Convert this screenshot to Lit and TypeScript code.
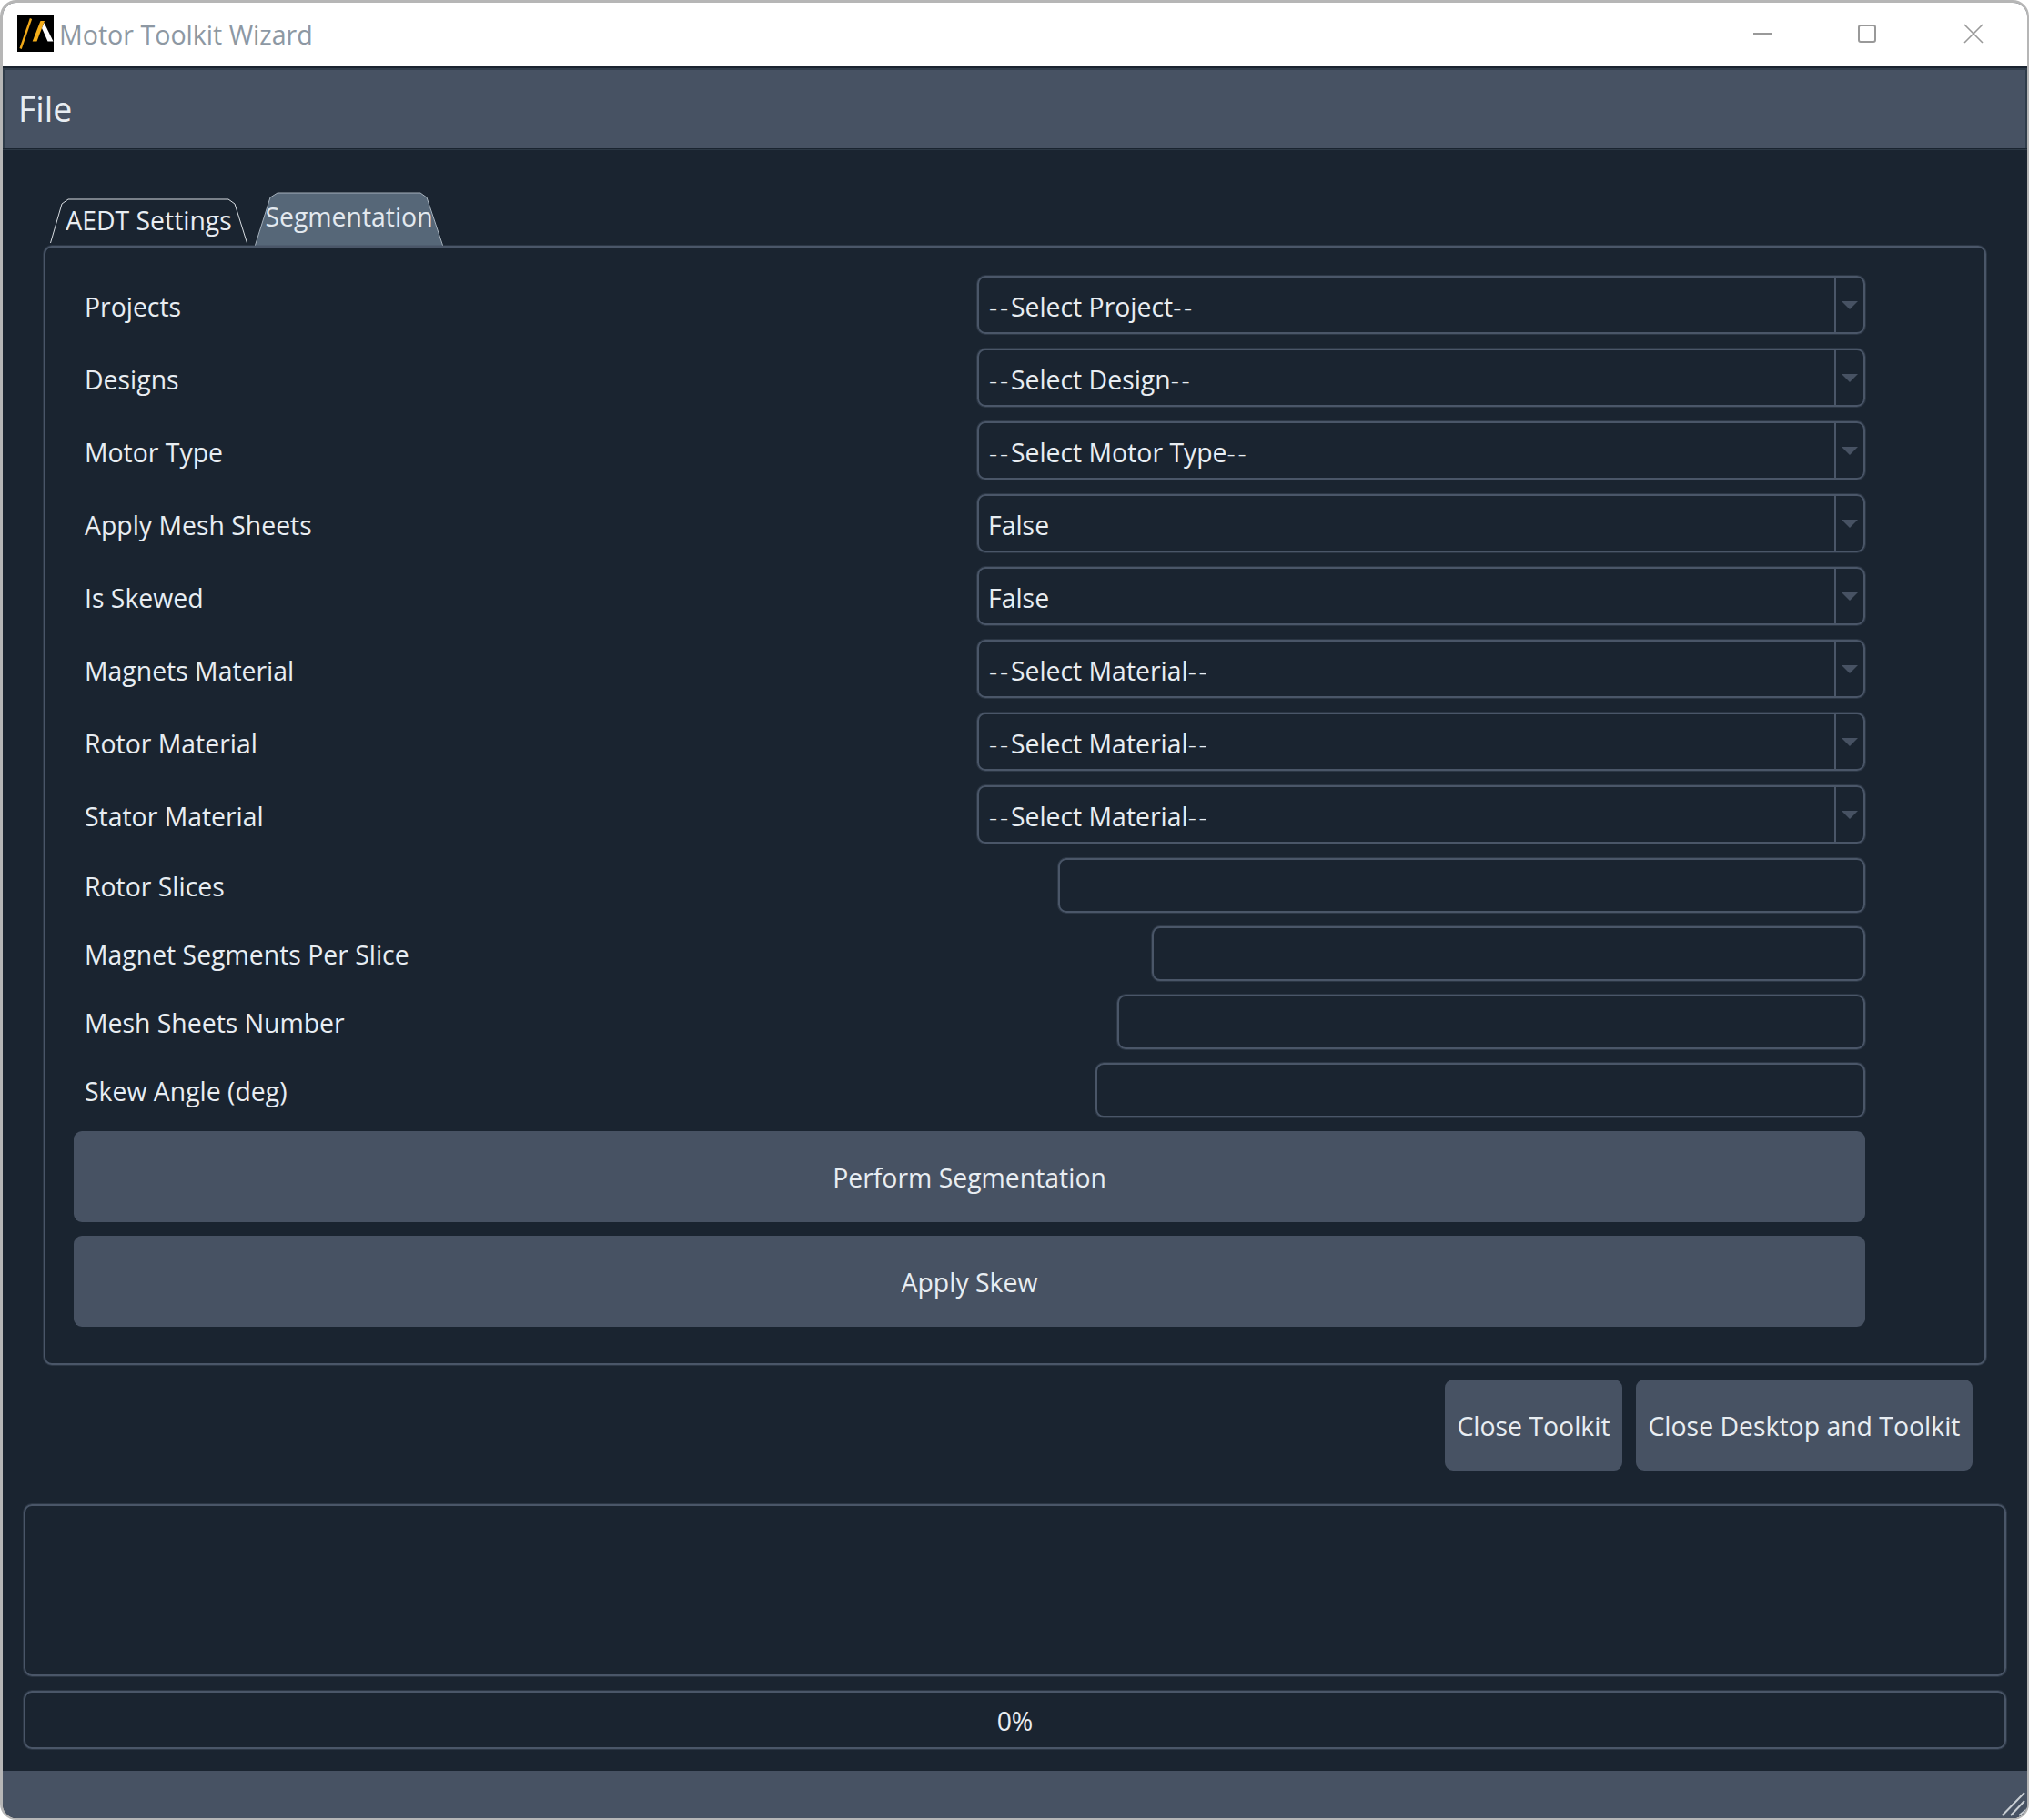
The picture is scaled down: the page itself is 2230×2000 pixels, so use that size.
import { LitElement, html, css } from "lit";
import { customElement } from "lit/decorators.js";

const selects = [
  ["Projects", "Select Project", true],
  ["Designs", "Select Design", true],
  ["Motor Type", "Select Motor Type", true],
  ["Apply Mesh Sheets", "False", false],
  ["Is Skewed", "False", false],
  ["Magnets Material", "Select Material", true],
  ["Rotor Material", "Select Material", true],
  ["Stator Material", "Select Material", true],
] as [string, string, boolean][];
const inputs: [string, number][] = [
  ["Rotor Slices", 887],
  ["Magnet Segments Per Slice", 784],
  ["Mesh Sheets Number", 822],
  ["Skew Angle (deg)", 846],
];

@customElement("app-root")
export class AppRoot extends LitElement {
  static styles = css`
    :host { display: block; width: 2230px; height: 2000px; font-family: "Open Sans", "Noto Sans", sans-serif; background: #fff; }
    * { box-sizing: border-box; }
    .window { height: 2000px; border: 3px solid #b6b6b6; border-width: 3px 2px 2px 3px; border-radius: 18px; overflow: hidden; display: flex; flex-direction: column; background: #1a2430; }
    .title { height: 70px; flex: none; background: #fff; display: flex; align-items: center; padding: 0 48px 2px 16px; color: #8d98a3; font-size: 28.6px; }
    .logo { width: 40px; height: 40px; margin-right: 6px; display: block; flex: none; }
    .winbtns { margin-left: auto; display: flex; align-items: center; }
    .winbtns svg { width: 22px; height: 22px; display: block; }
    .winbtns .mx { margin-left: 93px; }
    .winbtns .cl { margin-left: 95px; }
    .menu { flex: none; height: 88px; margin-top: 2px; background: #475263; border: 2px solid #2f3c4a; border-bottom: none; display: flex; align-items: center; padding: 0 0 1px 15px; color: #e8edf2; font-size: 37.5px; }
    .rule { flex: none; height: 1px; margin-top: 1px; background: #2c3845; }
    .main { flex: 1; display: flex; flex-direction: column; color: #e8edf2; font-size: 28.4px; }
    .tabs { margin: 46px 0 0 52px; height: 60px; display: flex; align-items: flex-end; }
    .tab { position: relative; display: flex; align-items: center; justify-content: center; }
    .tab svg { position: absolute; inset: 0; width: 100%; height: 100%; display: block; }
    .tab span { position: relative; white-space: nowrap; }
    .tab.off { width: 217px; height: 50px; margin-bottom: 3px; }
    .tab.off span { margin-top: -3px; }
    .tab.on { width: 207px; height: 60px; margin-left: 8px; }
    .tab.on span { margin-top: -6px; color: #e3e9ef; }
    .panel { margin: -1px 45px 0; height: 1230px; border: 2px solid #4a5668; box-shadow: 0 0 0 1px rgba(71, 82, 99, 0.4); border-radius: 9px; padding: 31px 131px 0 31px; display: flex; flex-direction: column; position: relative; background: #1a2430; }
    .row { display: flex; justify-content: space-between; align-items: center; padding-left: 12px; }
    .row.sel { height: 64px; margin-bottom: 16px; }
    .row.sel label { padding-top: 4px; }
    .row.inp { height: 60px; margin-bottom: 15px; }
    .row.inp label { padding-top: 2px; }
    .row label { white-space: nowrap; }
    .select { width: 976px; height: 64px; border: 2px solid #4a5668; box-shadow: 0 0 0 1px rgba(71, 82, 99, 0.4); border-radius: 9px; display: flex; align-items: center; }
    .select .v { flex: 1; padding: 4px 0 0 10px; }
    .dash { letter-spacing: 2.8px; font-weight: 300; }
    .dash:first-child { margin-left: 1px; }
    .select .arrow { width: 32px; height: 100%; border-left: 2px solid #4a5668; display: flex; align-items: center; justify-content: center; }
    .select .arrow svg { width: 18px; height: 9px; display: block; }
    .input { height: 60px; border: 2px solid #4a5668; box-shadow: 0 0 0 1px rgba(71, 82, 99, 0.4); border-radius: 9px; }
    .btn { background: #475263; border-radius: 9px; display: flex; align-items: center; justify-content: center; height: 100px; padding-top: 2px; }
    .btn.wide { margin-bottom: 15px; }
    .closes { display: flex; justify-content: flex-end; gap: 15px; margin: 16px 60px 0 0; }
    .closes .a { width: 195px; }
    .closes .b { width: 370px; }
    .log { margin: 37px 23px 0; height: 189px; border: 2px solid #4a5668; box-shadow: 0 0 0 1px rgba(71, 82, 99, 0.4); border-radius: 9px; }
    .progress { margin: 16px 23px 0; height: 64px; border: 2px solid #4a5668; box-shadow: 0 0 0 1px rgba(71, 82, 99, 0.4); border-radius: 9px; display: flex; align-items: center; justify-content: center; padding-top: 2px; }
    .status { flex: none; height: 52px; background: #475263; margin-top: auto; position: relative; }
    .grip { position: absolute; right: 0; bottom: 0; width: 30px; height: 30px; display: block; }
  `;

  private arrow() {
    return html`<span class="arrow"><svg viewBox="0 0 18 9"><path d="M0 0H18L9 9Z" fill="#475263"></path></svg></span>`;
  }

  private value(v: string, dashed: boolean) {
    return dashed
      ? html`<span class="dash">--</span>${v}<span class="dash">--</span>`
      : html`${v}`;
  }

  render() {
    return html`<div class="window">
      <div class="title">
        <svg class="logo" viewBox="0 0 40 40">
          <rect width="40" height="40" fill="#000"></rect>
          <path d="M3.6 36.5L15 3.5" stroke="#f0a818" stroke-width="2.4" fill="none"></path>
          <path d="M16.7 28.5H21.5L30 6H25.5Z" fill="#f5ae1a"></path>
          <path d="M29.5 8L39.5 28.5H33.5L27 14Z" fill="#fff"></path>
        </svg>
        <span>Motor Toolkit Wizard</span>
        <div class="winbtns">
          <svg viewBox="0 0 22 22"><path d="M1 11H21" stroke="#999" stroke-width="2"></path></svg>
          <svg class="mx" viewBox="0 0 22 22"><rect x="2" y="2" width="18" height="18" rx="2" fill="none" stroke="#999" stroke-width="2"></rect></svg>
          <svg class="cl" viewBox="0 0 22 22"><path d="M1 1L21 21M21 1L1 21" stroke="#999" stroke-width="1.6"></path></svg>
        </div>
      </div>
      <div class="menu">File</div>
      <div class="rule"></div>
      <div class="main">
        <div class="tabs">
          <div class="tab off">
            <svg viewBox="0 0 217 50" preserveAspectRatio="none"><path d="M0.5 49L13 6L20 1H196L203 6L216.5 49" fill="none" stroke="#d8dde2" stroke-width="1"></path></svg>
            <span>AEDT Settings</span>
          </div>
          <div class="tab on">
            <svg viewBox="0 0 207 60" preserveAspectRatio="none"><path d="M0 60L17 6L25 1H182L189 6L207 60Z" fill="#566778"></path><path d="M0 60L17 6L25 1H182L189 6L207 60" fill="none" stroke="#a5b0bb" stroke-width="1"></path></svg>
            <span>Segmentation</span>
          </div>
        </div>
        <div class="panel">
          ${selects.map(([l, v, d]) => html`<div class="row sel"><label>${l}</label><div class="select"><span class="v">${this.value(v, d)}</span>${this.arrow()}</div></div>`)}
          ${inputs.map(([l, w]) => html`<div class="row inp"><label>${l}</label><div class="input" style="width:${w}px"></div></div>`)}
          <div class="btn wide">Perform Segmentation</div>
          <div class="btn wide">Apply Skew</div>
        </div>
        <div class="closes"><div class="btn a">Close Toolkit</div><div class="btn b">Close Desktop and Toolkit</div></div>
        <div class="log"></div>
        <div class="progress">0%</div>
        <div class="status">
          <svg class="grip" viewBox="0 0 30 30"><path d="M2.6 27L27 2M12 27L27 11M21 27L30 20" stroke="#c9ced3" stroke-width="2" fill="none"></path></svg>
        </div>
      </div>
    </div>`;
  }
}
